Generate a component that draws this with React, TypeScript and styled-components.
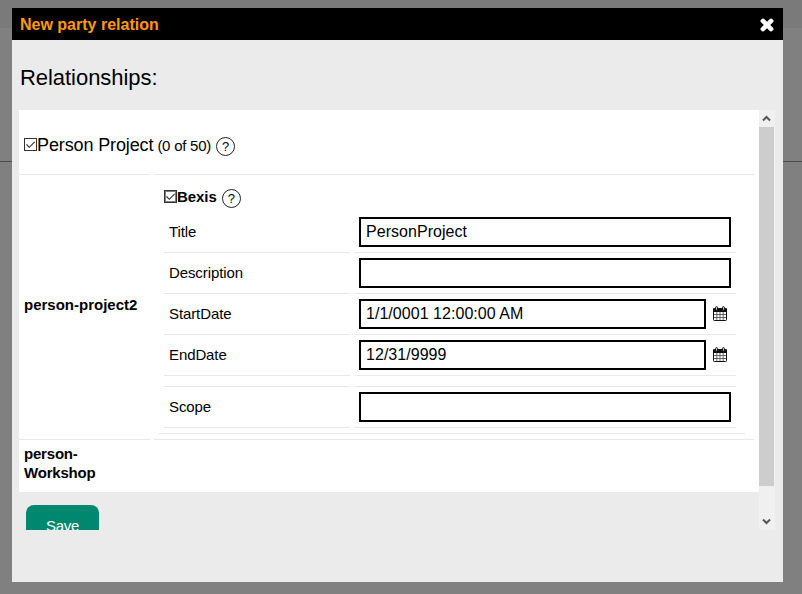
import React from "react";
import styled, { createGlobalStyle } from "styled-components";

const GlobalStyle = createGlobalStyle`
  * { box-sizing: border-box; }
  body {
    margin: 0;
    overflow: hidden;
    background: #808080;
    font-family: "Liberation Sans", Arial, sans-serif;
    font-size: 15px;
    color: #000;
  }
`;

const Backdrop = styled.div`
  width: 802px;
  height: 594px;
  padding: 8px 19px 12px 12px;
  background:
    linear-gradient(#4d4d4d, #4d4d4d) 0 161px / 100% 1px no-repeat,
    linear-gradient(#7a7a7a, #7a7a7a) 0 0 / 100% 28px no-repeat,
    #808080;
`;

const Dialog = styled.section`
  display: flex;
  flex-direction: column;
  width: 771px;
  height: 574px;
  background: #ebebeb;
`;

const TitleBar = styled.header`
  display: flex;
  align-items: center;
  justify-content: space-between;
  height: 32px;
  padding: 2px 9px 0 8px;
  background: #000;
`;

const Title = styled.h1`
  margin: 0;
  font-size: 16px;
  line-height: 30px;
  color: #ff9913;
`;

const CloseButton = styled.button`
  display: flex;
  margin: 0;
  padding: 0;
  border: 0;
  background: none;
`;

const Heading = styled.h2`
  height: 70px;
  margin: 0;
  padding: 25px 8px 0;
  font-size: 22px;
  font-weight: 400;
  line-height: 25px;
  letter-spacing: -0.05px;
`;

const ScrollArea = styled.div`
  display: flex;
  width: 756px;
  height: 420px;
  margin-left: 7px;
  overflow: hidden;
`;

const Content = styled.div`
  width: 740px;
`;

const Relations = styled.div`
  display: grid;
  grid-template-columns: 131px 600px;
  grid-template-rows: 65px 265px 52px;
  column-gap: 4px;
  height: 382px;
  background: #fff;
`;

const Cell = styled.div<{ $last?: boolean }>`
  border-bottom: ${(p) => (p.$last ? "0" : "1px solid #e8e8e8")};
`;

const TypeCell = styled(Cell)`
  display: flex;
  align-items: center;
  padding: 0 5px ${(p) => (p.$last ? "6px" : "5px")};
  font-weight: 700;
  line-height: 19px;
  letter-spacing: ${(p) => (p.$last ? "-0.2px" : "0")};
`;

const GroupCell = styled(Cell)`
  padding: 24px 5px 0;
  white-space: nowrap;
`;

const CheckLine = styled.div`
  display: flex;
  align-items: center;
  height: 22px;

  & > * { flex-shrink: 0; }
  & > svg { margin-bottom: 2px; }
`;

const GroupName = styled.span`
  margin-right: 4px;
  font-size: 18px;
  line-height: 20px;
  letter-spacing: -0.12px;
`;

const Count = styled.span`
  margin: 1px 5px 0 0;
  line-height: 20px;
  letter-spacing: -0.25px;
`;

const PartyName = styled.strong`
  margin-right: 5px;
  line-height: 20px;
  letter-spacing: -0.05px;
`;

const HelpBadge = styled.span`
  display: flex;
  align-items: center;
  justify-content: center;
  width: 19px;
  height: 19px;
  margin-top: 3px;
  border: 1px solid #222;
  border-radius: 50%;
  font-size: 13px;
  line-height: 17px;
`;

const FormCell = styled(Cell)`
  padding: 11px 9px 5px 5px;
`;

const PartyBlock = styled.div`
  height: 248px;
  padding: 0 9px 0 5px;
  border-bottom: 1px solid #e8e8e8;
`;

const PartyLine = styled(CheckLine)`
  height: 26px;
  padding-bottom: 4px;
`;

const FieldRow = styled.div<{ $spaced?: boolean }>`
  display: grid;
  grid-template-columns: 186px 382px;
  column-gap: 4px;
  height: ${(p) => (p.$spaced ? "52px" : "41px")};
  grid-template-rows: ${(p) => (p.$spaced ? "11px 41px" : "41px")};
`;

const FieldCell = styled.div`
  display: flex;
  align-items: center;
  padding: 0 5px;
  border-bottom: 1px solid #e8e8e8;
`;

const FieldLabel = styled(FieldCell)`
  letter-spacing: -0.1px;
  padding-bottom: 1px;
`;

const TextInput = styled.input`
  flex: 1;
  min-width: 0;
  height: 30px;
  padding: 0 5px 1px;
  border: 2px solid #000;
  border-radius: 0;
  outline: 0;
  background: #fff;
  color: #000;
  font: 16px "Liberation Sans", Arial, sans-serif;
  letter-spacing: 0.04px;
`;

const DateButton = styled.button`
  display: flex;
  width: 25px;
  padding: 0 0 2px 7px;
  border: 0;
  background: none;
`;

const SaveButton = styled.button`
  display: block;
  width: 73px;
  height: 42px;
  margin: 13px 0 0 7px;
  padding: 0 0 2px;
  border: 0;
  border-radius: 8px;
  background: #008770;
  color: #fff;
  font: 15px "Liberation Sans", Arial, sans-serif;
  letter-spacing: -0.3px;
`;

const ScrollTrack = styled.div`
  display: flex;
  flex-direction: column;
  justify-content: space-between;
  width: 16px;
  height: 420px;
  background: #f0f0f0;
`;

const ScrollThumb = styled.div`
  width: 15px;
  height: 359px;
  margin-bottom: auto;
  background: #cdcdcd;
`;

const ArrowBox = styled.div`
  display: flex;
  align-items: center;
  justify-content: center;
  width: 15px;
  height: 17px;
`;

const CloseIcon = () => (
  <svg width="14" height="14" viewBox="0 0 14 14" aria-hidden="true">
    <path d="M3 3 11 11M11 3 3 11" stroke="#fff" strokeWidth="4" strokeLinecap="square" />
    <path d="M3 3 11 11M11 3 3 11" stroke="#fff" strokeWidth="4.4" strokeLinecap="round" />
  </svg>
);

const Checkbox = ({ focused = false }: { focused?: boolean }) => (
  <svg width="13" height="13" viewBox="0 0 13 13" fill="none" aria-hidden="true">
    <rect x=".5" y=".5" width="12" height="12" fill="#fff" stroke="#333" />
    <path d="m2.5 6.5 2.8 2.8 5.4-5.5" stroke="#333" strokeWidth="1.15" />
    {focused && (
      <rect x="1.5" y="1.5" width="10" height="10" stroke="#000" strokeDasharray="1 1" />
    )}
  </svg>
);

const CalendarIcon = () => (
  <svg width="14" height="15" viewBox="0 0 14 15" aria-hidden="true">
    <rect x=".5" y="2.5" width="13" height="12" rx=".8" fill="#fff" stroke="#111" />
    <path d="M0 2.5h14V6H0z" fill="#111" />
    <path d="M3.8 6v8M7 6v8M10.2 6v8M1 8.5h12M1 11.5h12" stroke="#555" strokeWidth=".9" />
    <rect x="2.6" y=".6" width="2" height="3.6" rx="1" fill="#ddd" stroke="#111" />
    <rect x="9.4" y=".6" width="2" height="3.6" rx="1" fill="#ddd" stroke="#111" />
  </svg>
);

const Chevron = ({ down = false }: { down?: boolean }) => (
  <svg width="9" height="7" viewBox="0 0 9 7" fill="none" aria-hidden="true">
    <path d={down ? "M1 1.5 4.5 5 8 1.5" : "M1 5.5 4.5 2 8 5.5"} stroke="#555" strokeWidth="2" />
  </svg>
);

type Field = { label: string; value: string; date?: boolean; spaced?: boolean };

const fields: Field[] = [
  { label: "Title", value: "PersonProject" },
  { label: "Description", value: "" },
  { label: "StartDate", value: "1/1/0001 12:00:00 AM", date: true },
  { label: "EndDate", value: "12/31/9999", date: true },
  { label: "Scope", value: "", spaced: true },
];

const FieldLine = ({ label, value, date, spaced }: Field) => (
  <FieldRow $spaced={spaced}>
    {spaced && (
      <>
        <FieldCell />
        <FieldCell />
      </>
    )}
    <FieldLabel>{label}</FieldLabel>
    <FieldCell>
      <TextInput defaultValue={value} aria-label={label} />
      {date && (
        <DateButton aria-label="Pick a date">
          <CalendarIcon />
        </DateButton>
      )}
    </FieldCell>
  </FieldRow>
);

export default function App() {
  return (
    <>
      <GlobalStyle />
      <Backdrop>
        <Dialog>
          <TitleBar>
            <Title>New party relation</Title>
            <CloseButton aria-label="Close">
              <CloseIcon />
            </CloseButton>
          </TitleBar>
          <Heading>Relationships:</Heading>
          <ScrollArea>
            <Content>
              <Relations>
                <GroupCell>
                  <CheckLine>
                    <Checkbox />
                    <GroupName>Person Project</GroupName>
                    <Count>(0 of 50)</Count>
                    <HelpBadge>?</HelpBadge>
                  </CheckLine>
                </GroupCell>
                <Cell />
                <TypeCell>person-project2</TypeCell>
                <FormCell>
                  <PartyBlock>
                    <PartyLine>
                      <Checkbox focused />
                      <PartyName>Bexis</PartyName>
                      <HelpBadge>?</HelpBadge>
                    </PartyLine>
                    {fields.map((f) => (
                      <FieldLine key={f.label} {...f} />
                    ))}
                  </PartyBlock>
                </FormCell>
                <TypeCell $last>person-Workshop</TypeCell>
                <Cell $last />
              </Relations>
              <SaveButton>Save</SaveButton>
            </Content>
            <ScrollTrack>
              <ArrowBox>
                <Chevron />
              </ArrowBox>
              <ScrollThumb />
              <ArrowBox>
                <Chevron down />
              </ArrowBox>
            </ScrollTrack>
          </ScrollArea>
        </Dialog>
      </Backdrop>
    </>
  );
}
